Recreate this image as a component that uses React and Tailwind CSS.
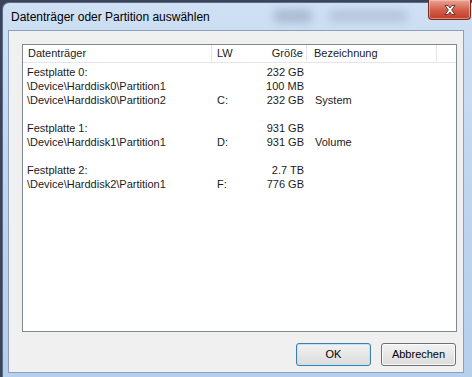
const rows = [
  { name: 'Festplatte 0:', lw: '', size: '232 GB', label: '' },
  { name: '\\Device\\Harddisk0\\Partition1', lw: '', size: '100 MB', label: '' },
  { name: '\\Device\\Harddisk0\\Partition2', lw: 'C:', size: '232 GB', label: 'System' },
  null,
  { name: 'Festplatte 1:', lw: '', size: '931 GB', label: '' },
  { name: '\\Device\\Harddisk1\\Partition1', lw: 'D:', size: '931 GB', label: 'Volume' },
  null,
  { name: 'Festplatte 2:', lw: '', size: '2.7 TB', label: '' },
  { name: '\\Device\\Harddisk2\\Partition1', lw: 'F:', size: '776 GB', label: '' },
];

function CloseButton() {
  return (
    <div className="flex h-[20px] w-[43px] items-center justify-center rounded-b-[4px] border border-t-0 border-[#6e2b22] bg-gradient-to-b from-[#e9a596] via-[#d4614c] to-[#c23b26] shadow-[inset_0_0_0_1px_rgba(255,200,190,0.55)]">
      <svg width="14" height="12" viewBox="0 0 14 12">
        <path
          d="M2 1.5 L5.2 1.5 L7 4 L8.8 1.5 L12 1.5 L8.6 6 L12 10.5 L8.8 10.5 L7 8 L5.2 10.5 L2 10.5 L5.4 6 Z"
          fill="#ffffff"
          stroke="#5a2a24"
          strokeWidth="0.9"
          strokeLinejoin="round"
        />
      </svg>
    </div>
  );
}

function Row({ row }) {
  if (!row) return <div className="h-[14px]" />;
  return (
    <div className="flex h-[14px] items-center overflow-hidden leading-[14px]">
      <div className="w-[189px] pl-[4px] whitespace-nowrap">{row.name}</div>
      <div className="w-[40px] pl-[5px]">{row.lw}</div>
      <div className="w-[55px] pr-[3px] text-right">{row.size}</div>
      <div className="pl-[8px]">{row.label}</div>
    </div>
  );
}

export default function App() {
  return (
    <div className="h-[377px] w-[472px] overflow-hidden bg-[#3b4458] pl-[2px] pt-[2px] font-['Segoe_UI','Liberation_Sans',sans-serif] text-[11px] text-[#1b1b1b]">
      <div className="relative flex h-[380px] w-[480px] flex-col rounded-tl-[7px] border-l border-t border-[#596b86] bg-gradient-to-b from-[#cfe0f4] via-[#bfd5ee] to-[#b6cfeb] pl-[5px]">
        <div className="pointer-events-none absolute left-[270px] top-[6px] h-[14px] w-[40px] rounded-full bg-[#8a9bb2] opacity-50 blur-[4px]" />
        <div className="pointer-events-none absolute left-[325px] top-[7px] h-[12px] w-[80px] rounded-full bg-[#95a7be] opacity-45 blur-[4px]" />
        <div className="relative flex h-[27px] items-center pl-[3px]">
          <span className="mt-[1px] text-[12px] text-black">Datenträger oder Partition auswählen</span>
          <div className="absolute left-[420px] top-[-3px]">
            <CloseButton />
          </div>
        </div>
        <div className="flex h-[343px] w-[456px] flex-col border border-[#8aa0bd] bg-[#f0f0f0] pb-[6px] pl-[13px] pr-[6px] pt-[13px]">
          <div className="flex h-[288px] flex-col border border-[#828790] bg-white">
            <div className="flex h-[18px] items-center border-b border-[#e3e5e8] text-[#1b1b1b]">
              <div className="w-[189px] border-r border-[#e3e5e8] pl-[5px] leading-[17px]">Datenträger</div>
              <div className="w-[40px] pl-[5px] leading-[17px]">LW</div>
              <div className="w-[55px] border-r border-[#e3e5e8] pr-[3px] text-right leading-[17px]">Größe</div>
              <div className="w-[130px] border-r border-[#e3e5e8] pl-[7px] leading-[17px]">Bezeichnung</div>
            </div>
            <div className="flex flex-col pt-[2px]">
              {rows.map((row, i) => (
                <Row key={i} row={row} />
              ))}
            </div>
          </div>
          <div className="mt-[11px] flex justify-end gap-[10px] pr-[1px]">
            <button className="h-[23px] w-[75px] rounded-[3px] border border-[#3c7fb1] bg-gradient-to-b from-[#f2f2f2] to-[#dcdcdc] text-[11px] text-black shadow-[inset_0_0_0_1px_#bfe4f8]">
              OK
            </button>
            <button className="h-[23px] w-[75px] rounded-[3px] border border-[#707070] bg-gradient-to-b from-[#f2f2f2] to-[#dcdcdc] text-[11px] text-black shadow-[inset_0_0_0_1px_#fcfcfc]">
              Abbrechen
            </button>
          </div>
        </div>
      </div>
    </div>
  );
}
